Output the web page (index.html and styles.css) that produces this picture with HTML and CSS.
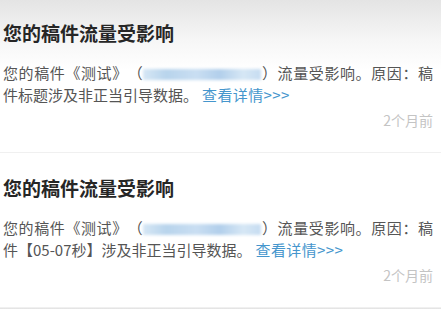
FILE: index.html
```html
<!DOCTYPE html>
<html lang="zh-CN">
<head>
    <meta charset="UTF-8">
    <meta name="viewport" content="width=device-width, initial-scale=1.0">
    <title>消息通知</title>
    <link rel="stylesheet" href="styles.css">
</head>
<body>
    <div class="notices">
        <div class="notice">
            <h3 class="notice-title">您的稿件流量受影响</h3>
            <p class="notice-body">您的稿件《测试》（<span class="masked"></span>）流量受影响。原因：稿件标题涉及非正当引导数据。<a class="more" href="#">查看详情&gt;&gt;&gt;</a></p>
            <div class="notice-time">2个月前</div>
        </div>
        <div class="notice">
            <h3 class="notice-title">您的稿件流量受影响</h3>
            <p class="notice-body">您的稿件《测试》（<span class="masked"></span>）流量受影响。原因：稿件【05-07秒】涉及非正当引导数据。<a class="more" href="#">查看详情&gt;&gt;&gt;</a></p>
            <div class="notice-time">2个月前</div>
        </div>
    </div>
</body>
</html>
```

FILE: styles.css
```css
/* Base */
body {
    margin: 0;
    font-family: "Noto Sans CJK SC", "Noto Sans", sans-serif;
    background: linear-gradient(#e4e4e4, #f6f6f6 40px, #fff 70px);
    overflow: hidden;
}

.notices {
    margin-top: -2px;
}

/* Each notice */
.notice {
    padding: 22px 8px 22px 3px;
    border-bottom: 1px solid #f0f0f0;
}

.notice-title {
    margin: 0;
    font-size: 19px;
    line-height: 26px;
    font-weight: bold;
    color: #262626;
}

.notice-body {
    margin: 16px 0 0;
    font-size: 15px;
    line-height: 22px;
    color: #555;
    text-align: justify;
    text-spacing-trim: space-all;
}

/* blurred-out link text */
.masked {
    display: inline-block;
    width: 118px;
    height: 11px;
    vertical-align: -1px;
    background: linear-gradient(90deg, #d6e7f5, #b8d4ec 20%, #c9def2 45%, #b2cfeb 65%, #d6e7f5 85%, #c6dcf1);
    filter: blur(1.5px);
}

.more {
    margin-left: 4px;
    color: #4596cd;
    text-decoration: none;
    letter-spacing: 0.4px;
}

.notice-time {
    margin-top: 4px;
    font-size: 14px;
    line-height: 20px;
    color: #c4c4c4;
    text-align: right;
}
```
